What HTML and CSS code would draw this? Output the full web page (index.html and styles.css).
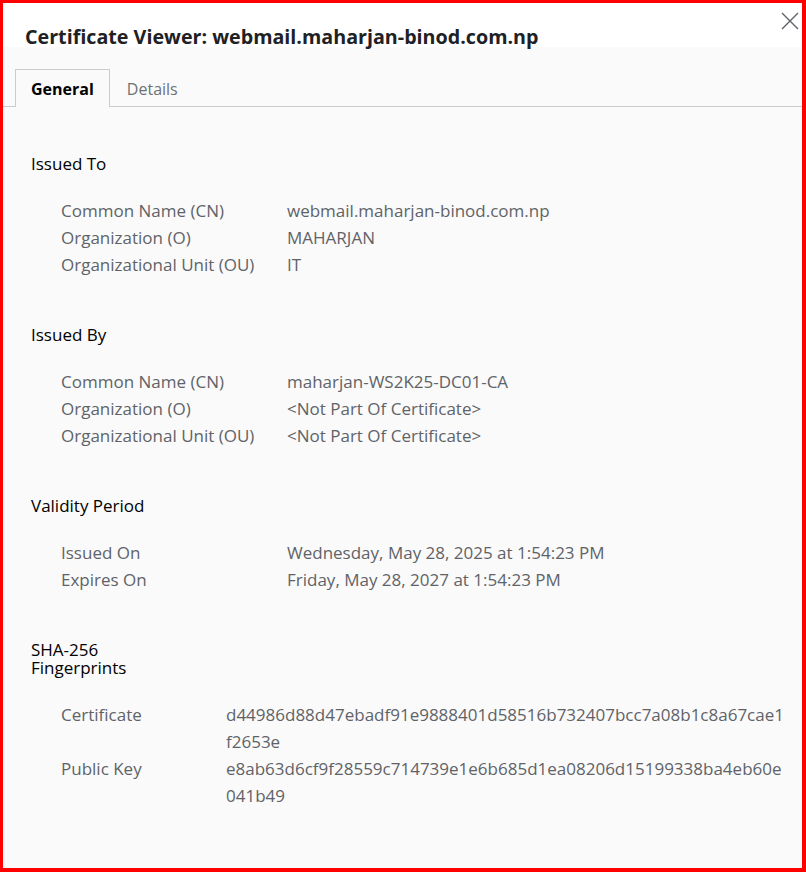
FILE: index.html
```html
<!DOCTYPE html>
<html lang="en">
<head>
  <meta charset="UTF-8" />
  <meta name="viewport" content="width=device-width, initial-scale=1.0"/>
  <title>Certificate Viewer</title>
  <link rel="stylesheet" href="styles.css">
</head>
<body>
  <div class="dialog">
    <button class="close-btn" aria-label="Close">
      <svg width="20" height="20" viewBox="0 0 20 20">
        <path d="M2 2 L18 18 M18 2 L2 18" stroke="#5f6368" stroke-width="1.4" fill="none"/>
      </svg>
    </button>

    <h1 class="title">Certificate Viewer: webmail.maharjan-binod.com.np</h1>

    <!-- Tabs -->
    <div class="tabs">
      <div class="tab active">General</div>
      <div class="tab">Details</div>
    </div>

    <div class="content">
      <!-- Issued To -->
      <div class="section">
        <h2>Issued To</h2>
        <div class="rows">
          <div class="label">Common Name (CN)</div>
          <div class="value">webmail.maharjan-binod.com.np</div>
          <div class="label">Organization (O)</div>
          <div class="value">MAHARJAN</div>
          <div class="label">Organizational Unit (OU)</div>
          <div class="value">IT</div>
        </div>
      </div>

      <!-- Issued By -->
      <div class="section">
        <h2>Issued By</h2>
        <div class="rows">
          <div class="label">Common Name (CN)</div>
          <div class="value">maharjan-WS2K25-DC01-CA</div>
          <div class="label">Organization (O)</div>
          <div class="value">&lt;Not Part Of Certificate&gt;</div>
          <div class="label">Organizational Unit (OU)</div>
          <div class="value">&lt;Not Part Of Certificate&gt;</div>
        </div>
      </div>

      <!-- Validity Period -->
      <div class="section">
        <h2>Validity Period</h2>
        <div class="rows">
          <div class="label">Issued On</div>
          <div class="value">Wednesday, May 28, 2025 at 1:54:23 PM</div>
          <div class="label">Expires On</div>
          <div class="value">Friday, May 28, 2027 at 1:54:23 PM</div>
        </div>
      </div>

      <!-- Fingerprints -->
      <div class="section">
        <h2 class="narrow">SHA-256 Fingerprints</h2>
        <div class="rows fingerprints">
          <div class="label">Certificate</div>
          <div class="value hash">d44986d88d47ebadf91e9888401d58516b732407bcc7a08b1c8a67cae1f2653e</div>
          <div class="label">Public Key</div>
          <div class="value hash">e8ab63d6cf9f28559c714739e1e6b685d1ea08206d15199338ba4eb60e041b49</div>
        </div>
      </div>
    </div>
  </div>
</body>
</html>
```

FILE: styles.css
```css
* {
  box-sizing: border-box;
}

body {
  margin: 0;
  font-family: "Open Sans", "Noto Sans", sans-serif;
  color: #202124;
}

.dialog {
  position: relative;
  height: 872px;
  border: 3px solid #ff0000;
  border-right-width: 4px;
  border-bottom-width: 4px;
  background: linear-gradient(#ffffff 0, #ffffff 44px, #fafafa 44px);
}

.close-btn {
  position: absolute;
  top: 8px;
  right: 2px;
  border: none;
  background: none;
  padding: 0;
}

.title {
  margin: 0;
  padding: 20px 0 0 22px;
  font-size: 19.7px;
  line-height: 28px;
  font-weight: 700;
}

.tabs {
  display: flex;
  margin-top: 18px;
  padding-left: 12px;
  border-bottom: 1px solid #cccccc;
}

.tab {
  height: 38px;
  line-height: 38px;
  padding: 0 16px;
  font-size: 16px;
  color: #6d7175;
  margin-bottom: -1px;
  border: 1px solid transparent;
  border-bottom: none;
}

.tab.active {
  font-weight: 700;
  color: #000;
  padding: 0 15px;
  background: #fafafa;
  border-color: #cccccc;
}

.content {
  padding: 48px 0 0 28px;
}

.section {
  margin-bottom: 48px;
}

.section h2 {
  margin: 0;
  font-size: 17px;
  line-height: 18px;
  font-weight: 400;
  color: #000;
}

.section h2.narrow {
  max-inline-size: 90px;
}

.rows {
  display: grid;
  grid-template-columns: 226px 1fr;
  margin-top: 24px;
  padding-left: 30px;
  font-size: 17px;
  line-height: 27px;
  color: #5f6368;
}

.rows.fingerprints {
  grid-template-columns: 165px 560px;
}

.hash {
  word-break: break-all;
}
```
